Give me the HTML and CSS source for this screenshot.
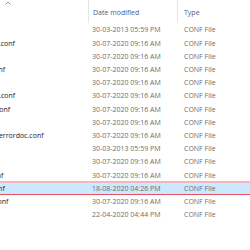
FILE: index.html
```html
<!DOCTYPE html>
<html>
<head>
<meta charset="utf-8">
<link rel="stylesheet" href="styles.css">
</head>
<body>
<div class="list">
  <div class="header">
    <div class="hcell hname"><svg class="sort" width="6" height="4" viewBox="0 0 6 4"><path d="M0.5 3.5 L3 1 L5.5 3.5" fill="none" stroke="#8d99a8" stroke-width="1"/></svg></div>
    <div class="hcell hdate">Date modified</div>
    <div class="hcell htype">Type</div>
  </div>
  <div class="row"><div class="name"><span>httpd-ajp.conf</span></div><div class="date">30-03-2013 05:59 PM</div><div class="type">CONF File</div></div>
  <div class="row"><div class="name"><span>httpd-autoindex.conf</span></div><div class="date">30-07-2020 09:16 AM</div><div class="type">CONF File</div></div>
  <div class="row"><div class="name"><span>httpd-dav.conf</span></div><div class="date">30-07-2020 09:16 AM</div><div class="type">CONF File</div></div>
  <div class="row"><div class="name"><span>httpd-default.conf</span></div><div class="date">30-07-2020 09:16 AM</div><div class="type">CONF File</div></div>
  <div class="row"><div class="name"><span>httpd-info.conf</span></div><div class="date">30-07-2020 09:16 AM</div><div class="type">CONF File</div></div>
  <div class="row"><div class="name"><span>httpd-languages.conf</span></div><div class="date">30-07-2020 09:16 AM</div><div class="type">CONF File</div></div>
  <div class="row"><div class="name"><span>httpd-manuals.conf</span></div><div class="date">30-07-2020 09:16 AM</div><div class="type">CONF File</div></div>
  <div class="row"><div class="name"><span>httpd-mpm.conf</span></div><div class="date">30-07-2020 09:16 AM</div><div class="type">CONF File</div></div>
  <div class="row"><div class="name"><span>httpd-multilang-errordoc.conf</span></div><div class="date">30-07-2020 09:16 AM</div><div class="type">CONF File</div></div>
  <div class="row"><div class="name"><span>httpd-ssl.conf</span></div><div class="date">30-03-2013 05:59 PM</div><div class="type">CONF File</div></div>
  <div class="row"><div class="name"><span>httpd-sspi.conf</span></div><div class="date">30-07-2020 09:16 AM</div><div class="type">CONF File</div></div>
  <div class="row"><div class="name"><span>httpd-vhosts.conf</span></div><div class="date">30-07-2020 09:16 AM</div><div class="type">CONF File</div></div>
  <div class="row selected"><div class="name"><span>httpd-xampp.conf</span></div><div class="date">18-08-2020 04:26 PM</div><div class="type">CONF File</div></div>
  <div class="row"><div class="name"><span>proxy-html-en.conf</span></div><div class="date">30-07-2020 09:16 AM</div><div class="type">CONF File</div></div>
  <div class="row"><div class="name"><span>proxy-html.conf</span></div><div class="date">22-04-2020 04:44 PM</div><div class="type">CONF File</div></div>
</div>
</body>
</html>
```
FILE: styles.css
```css
html, body {
  margin: 0;
  padding: 0;
  background: #ffffff;
}
body {
  width: 250px;
  height: 250px;
  overflow: hidden;
  font-family: "Open Sans", "Noto Sans", sans-serif;
  font-size: 7px;
}
.list {
  display: flex;
  flex-direction: column;
}
.header {
  display: grid;
  grid-template-columns: 88px 89px 1fr;
  height: 23.4px;
}
.hcell {
  display: flex;
  align-items: center;
  height: 21px;
  color: #4c607a;
  white-space: nowrap;
}
.hname {
  align-items: flex-start;
  padding-left: 5px;
  padding-top: 1px;
}
.hdate {
  border-left: 1px solid #e5e5e5;
  padding-left: 4px;
  padding-top: 2px;
}
.htype {
  border-left: 1px solid #e5e5e5;
  padding-left: 6px;
  padding-top: 2px;
}
.row {
  display: grid;
  grid-template-columns: 88px 89px 1fr;
  height: 13.2px;
  align-items: center;
  white-space: nowrap;
}
.row.selected {
  background: #cce8ff;
  box-shadow: 0 -1px 0 #f4b6bd, inset 0 1px 0 #f4b6bd, inset 0 -1px 0 #e6505f;
}
.name {
  overflow: hidden;
  color: #1a1a2e;
}
.name span {
  display: inline-block;
  margin-left: -54px;
}
.date {
  padding-left: 4px;
  color: #6d6d6d;
}
.type {
  padding-left: 7px;
  color: #6d6d6d;
}
```
